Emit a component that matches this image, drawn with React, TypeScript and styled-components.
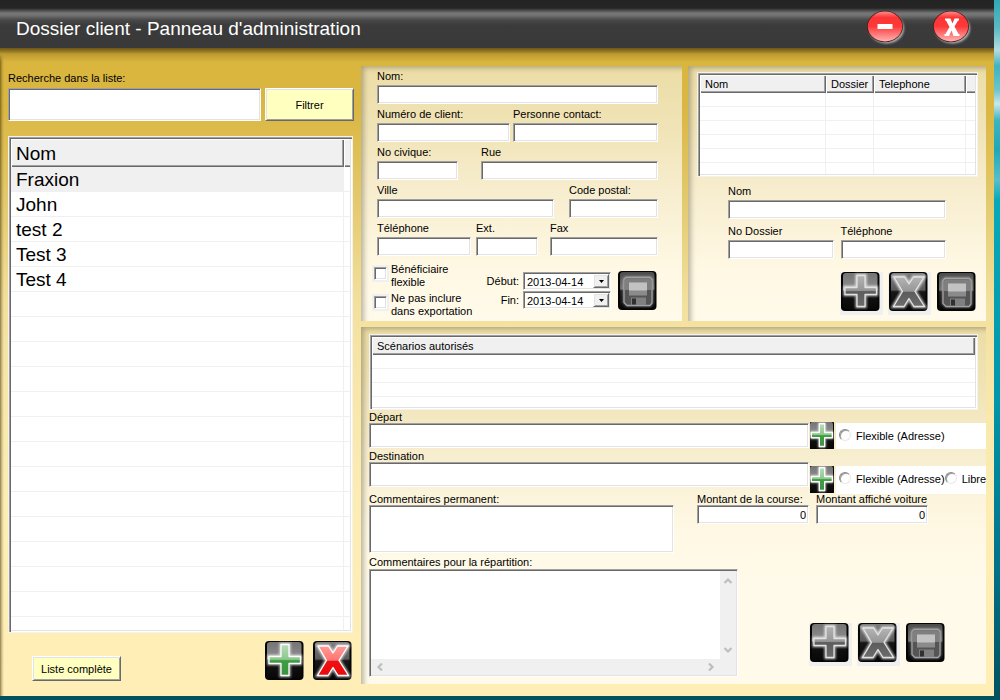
import React, { useId } from "react";
import styled, { createGlobalStyle, css } from "styled-components";

const GlobalStyle = createGlobalStyle`
  *, *::before, *::after { box-sizing: border-box; }
  body {
    margin: 0;
    min-height: 100vh;
    font: 11px/13px "Liberation Sans", Arial, sans-serif;
    color: #000;
    background: linear-gradient(180deg, #2fa9b4 0, #5bb9c2 28px, #b5dde0 50px, #3fb3bf 66px, #6cc5cc 90px,
      #c9e8ea 104px, #3fb4c1 120px, #1fa8b8 150px, #59bfc9 180px, #06a9bb 200px, #0096ab 400px,
      #00748c 560px, #00525f 696px);
  }
  input, button, select, textarea { font: inherit; color: inherit; margin: 0; }
`;

const sunken = css`
  border: 1px solid;
  border-color: #a0a0a0 #fff #fff #a0a0a0;
  box-shadow: inset 1px 1px 0 #696969, inset -1px -1px 0 #e3e3e3;
`;

const raised = css`
  border: 1px solid;
  border-color: #fff #696969 #696969 #fff;
  box-shadow: inset 1px 1px 0 #e3e3e3, inset -1px -1px 0 #a0a0a0;
`;

const Window = styled.div`
  margin: 0 6px 4px 0;
`;

const TitleBar = styled.header`
  height: 48px;
  padding: 6px 22px 0 16px;
  display: flex;
  align-items: center;
  background: linear-gradient(180deg, #232323 0, #252525 8px, #757575 13px, #757575 15px, #484848 20px, #3b3b3b 25px, #393939 100%);
`;

const Title = styled.h1`
  flex: 1;
  margin: 0;
  padding-top: 3px;
  color: #fff;
  font-size: 19px;
  line-height: 24px;
  font-weight: 400;
  white-space: nowrap;
`;

const RoundButtons = styled.div`
  display: flex;
  gap: 26px;
`;

const BareButton = styled.button`
  display: block;
  padding: 0;
  border: 0;
  background: none;
  svg { display: block; }
`;

const Body = styled.main`
  display: grid;
  grid-template-columns: 345px minmax(0, 1fr);
  gap: 8px;
  padding: 18px 8px 12px;
  background:
    linear-gradient(180deg, #6d5716 0, #8e7322 3px, #bd9a31 6px, rgba(217, 181, 60, 0) 14px),
    linear-gradient(90deg, rgba(70, 55, 10, 0.6) 0, rgba(70, 55, 10, 0.2) 2px, rgba(70, 55, 10, 0) 4px),
    linear-gradient(180deg, #d9b53c 0, #dab742 60px, #e4ca6e 155px, #f3e09d 255px, #f8e6a8 330px, #fdedb4 460px, #ffeeb6 100%);
`;

const Column = styled.div`
  display: flex;
  flex-direction: column;
  min-width: 0;
`;

const Label = styled.label<{ $line?: number }>`
  display: block;
  height: ${(p) => p.$line ?? 19}px;
  padding-top: 1px;
  line-height: ${(p) => p.$line ?? 19}px;
  white-space: nowrap;
`;

const TextBox = styled.input<{ $h?: number; $right?: boolean }>`
  ${sunken}
  display: block;
  width: 100%;
  height: ${(p) => p.$h ?? 19}px;
  padding: 1px 2px;
  border-radius: 0;
  outline: 0;
  background: #fff;
  text-align: ${(p) => (p.$right ? "right" : "left")};
`;

const TextArea = styled.textarea<{ $h: number }>`
  ${sunken}
  display: block;
  width: 100%;
  height: ${(p) => p.$h}px;
  padding: 2px;
  border-radius: 0;
  resize: none;
  background: #fff;
`;

const SearchRow = styled.div`
  display: grid;
  grid-template-columns: 1fr 89px;
  gap: 4px;
  margin: 0 -1px 15px 0;
`;

const PushButton = styled.button`
  ${raised}
  padding: 1px 0 0;
  border-radius: 0;
  background: #ffffc0;
`;

const ListFrame = styled.div<{ $h: number }>`
  height: ${(p) => p.$h}px;
  overflow: hidden;
  background: #fff;
  border: 1px solid #f4f2ea;
  box-shadow: inset 1px 1px 0 #a0a0a0, inset 2px 2px 0 #696969, inset -1px -1px 0 #fff, inset -2px -2px 0 #e3e3e3;
  padding: 2px;
`;

const Clip = styled.div`
  height: 100%;
  overflow: hidden;
`;

const ListTable = styled.table<{ $row: number; $head: number; $font: number }>`
  width: 100%;
  table-layout: fixed;
  border-collapse: separate;
  border-spacing: 0;
  font-size: ${(p) => p.$font}px;
  text-align: left;
  th {
    height: ${(p) => p.$head}px;
    padding: 0 5px;
    font-weight: 400;
    background: #f0f0f0;
    box-shadow: inset 1px 1px 0 #fff, inset -1px -1px 0 #696969, inset -2px -2px 0 #a0a0a0;
    white-space: nowrap;
  }
  th:last-child:not(:first-child) {
    box-shadow: inset 1px 1px 0 #fff, inset 0 -1px 0 #696969, inset 0 -2px 0 #a0a0a0;
  }
  td {
    height: ${(p) => p.$row}px;
    padding: 2px 5px 0;
    border-bottom: 1px solid #f0f0f0;
    border-right: 1px solid #f0f0f0;
    line-height: ${(p) => p.$row - 3}px;
  }
  td:last-child { border-right: 0; }
`;

const Cell = styled.td<{ $selected?: boolean }>`
  background: ${(p) => (p.$selected ? "#f0f0f0" : "transparent")};
`;

const ListActions = styled.div`
  display: flex;
  gap: 9px;
  padding: 7px 1px 0 24px;
`;

const FullListButton = styled(PushButton)`
  width: 89px;
  height: 25px;
  margin: 16px auto 0 0;
`;

const TopPanels = styled.div`
  display: grid;
  grid-template-columns: minmax(0, 321fr) minmax(0, 298fr);
  gap: 6px;
  margin-bottom: 6px;
`;

const Panel = styled.section<{ $pad: string }>`
  padding: ${(p) => p.$pad};
  background: linear-gradient(180deg, #ecdda6 0, #f0e3b6 60px, #f8efd2 135px, #fff8e4 205px, #fffaea 260px);
  box-shadow: inset 5px 4px 5px -2px rgba(90, 85, 60, 0.4);
`;

const FieldRow = styled.div<{ $cols: string; $gap?: number }>`
  display: grid;
  grid-template-columns: ${(p) => p.$cols};
  gap: ${(p) => p.$gap ?? 0}px;
`;

const OptionsRow = styled.div`
  display: flex;
  margin: 7px 0 0 -3px;
`;

const Checks = styled.div`
  display: flex;
  flex-direction: column;
  gap: 3px;
`;

const CheckLabel = styled.label`
  display: flex;
  gap: 4px;
`;

const CheckBox = styled.input`
  ${sunken}
  appearance: none;
  width: 13px;
  height: 13px;
  margin-top: 4px;
  background: #fff;
  outline: 2px solid #f0f0f0;
  outline-offset: 0;
`;

const Dates = styled.div`
  display: grid;
  grid-template-columns: auto 88px;
  align-content: start;
  column-gap: 4px;
  row-gap: 1px;
  margin: 9px 7px 0 auto;
  text-align: right;
`;

const Picker = styled.div`
  position: relative;
`;

const DateSelect = styled.select`
  ${sunken}
  appearance: none;
  display: block;
  width: 100%;
  height: 18px;
  padding: 2px 18px 0 3px;
  border-radius: 0;
  background: #fff;
`;

const Drop = styled.span`
  ${raised}
  position: absolute;
  top: 2px;
  right: 2px;
  width: 16px;
  height: 14px;
  display: grid;
  place-items: center;
  background: #f0f0f0;
  pointer-events: none;
`;

const SaveSlot = styled.div`
  margin: 8px 1px 0 0;
`;

const ContactForm = styled.div`
  display: grid;
  gap: 2px;
  padding: 4px 32px 0 31px;
`;

const Actions = styled.div<{ $margin: string }>`
  display: flex;
  justify-content: flex-end;
  gap: 5px;
  margin: ${(p) => p.$margin};
`;

const IconPad = styled.div<{ $on?: boolean }>`
  width: 43px;
  height: 43px;
  padding-left: 1px;
  background: ${(p) => (p.$on ? "#f0f0f0" : "transparent")};
`;

const AddressRow = styled.div<{ $h: number }>`
  display: grid;
  grid-template-columns: minmax(0, 1fr) 176px;
  gap: 1px;
  align-items: end;
  height: ${(p) => p.$h}px;
`;

const AddressField = styled.div`
  align-self: start;
`;

const Choices = styled.div<{ $h: number }>`
  display: flex;
  gap: 2px;
  height: ${(p) => p.$h}px;
`;

const RadioStrip = styled.div<{ $h: number }>`
  flex: 1;
  align-self: flex-end;
  display: flex;
  height: ${(p) => p.$h}px;
  padding: 6px 0 0 3px;
  background: #fff;
  white-space: nowrap;
`;

const RadioLabel = styled.label`
  display: flex;
  gap: 5px;
  height: 13px;
  line-height: 15px;
`;

const Radio = styled.input`
  appearance: none;
  flex: none;
  width: 12px;
  height: 12px;
  border: 1px solid;
  border-color: #8a8a8a #e8e8e8 #e8e8e8 #8a8a8a;
  border-radius: 50%;
  box-shadow: inset 1px 1px 0 #9c9c9c;
  background: #fff;
`;

const Notes = styled.div`
  display: grid;
  grid-template-columns: minmax(0, 1fr) 112px 112px 51px;
  column-gap: 7px;
`;

const NoteField = styled.div`
  margin-right: 16px;
`;

const TopLabel = styled.label`
  display: block;
  height: 11px;
  line-height: 10px;
  white-space: nowrap;
`;

const Dispatch = styled.div`
  display: grid;
  grid-template-columns: minmax(0, 369fr) 248px;
  align-items: end;
`;

const ScrollFrame = styled.div`
  ${sunken}
  display: grid;
  grid-template-columns: minmax(0, 1fr) 16px;
  grid-template-rows: 88px 16px;
  padding: 1px;
  background: #f0f0f0;
`;

const InnerArea = styled.textarea`
  display: block;
  width: 100%;
  height: 88px;
  padding: 1px;
  border: 0;
  outline: 0;
  resize: none;
  overflow: hidden;
  background: #fff;
`;

const Track = styled.div<{ $vertical?: boolean }>`
  display: flex;
  flex-direction: ${(p) => (p.$vertical ? "column" : "row")};
  justify-content: space-between;
  align-items: center;
  padding: ${(p) => (p.$vertical ? "6px 0 5px" : "0 5px")};
`;

type Glyph = "plus" | "cross" | "save";
type Tone = "green" | "red" | "gray";

const tones: Record<Tone, [string, string, string, string]> = {
  green: ["#b9dcb9", "#8cc78c", "#3f9f42", "#3a9440"],
  red: ["#ff9a96", "#ff7572", "#f01010", "#ea0a0a"],
  gray: ["#b4b4b4", "#979797", "#5c5c5c", "#6c6c6c"],
};

const outlines: Record<"plus" | "cross", string> = {
  plus: "M16 3.500H24V15.500H35.500V22.500H24V34.500H16V22.500H4V15.500H16Z",
  cross: "M5 5H15.500L20 12L24.500 5H35L26 19.500L35.500 34.500H25L20 26.500L15 34.500H4.500L13.500 19.500Z",
};

const backs: Record<Glyph, [string, string, string]> = {
  plus: ["#757575", "#8f8f8f", "#141414"],
  cross: ["#7c7c7c", "#5a5a5a", "#161616"],
  save: ["#4c4c4c", "#6e6e6e", "#1c1c1c"],
};

interface TileProps {
  glyph: Glyph;
  tone?: Tone;
  small?: boolean;
}

function TileIcon({ glyph, tone = "gray", small }: TileProps) {
  const id = useId().replace(/:/g, "");
  const t = tones[tone];
  const b = backs[glyph];
  const edge = tone === "gray" ? "#e2e2e2" : "#fff";
  return (
    <svg
      width={small ? 24 : 39}
      height={small ? 27 : 39}
      viewBox={small ? "2 1 36 37" : "0 0 39 39"}
      preserveAspectRatio="none"
      aria-hidden="true"
    >
      <defs>
        <linearGradient id={`g${id}`} x1="0" y1="0" x2="0" y2="1">
          <stop offset="0" stopColor={t[0]} />
          <stop offset=".48" stopColor={t[1]} />
          <stop offset=".52" stopColor={t[2]} />
          <stop offset="1" stopColor={t[3]} />
        </linearGradient>
        <linearGradient id={`b${id}`} x1="0" y1="0" x2="0" y2="1">
          <stop offset="0" stopColor={b[0]} />
          <stop offset=".47" stopColor={b[1]} />
          <stop offset=".52" stopColor={b[2]} />
          <stop offset="1" stopColor="#080808" />
        </linearGradient>
        <filter id={`f${id}`} x="-20%" y="-20%" width="140%" height="140%">
          <feGaussianBlur stdDeviation="1.300" />
        </filter>
      </defs>
      <rect width="38.500" height="39" rx="4" fill="#050505" />
      <rect x="2" y="1" width="34.500" height="36" rx="3" fill={`url(#b${id})`} />
      {glyph !== "save" && (
        <>
          <path d={outlines[glyph]} fill="none" stroke="#fff" strokeWidth="3.500" opacity=".65" filter={`url(#f${id})`} />
          <path
            d={outlines[glyph]}
            fill={`url(#g${id})`}
            stroke={edge}
            strokeWidth={small ? 2 : 1.3}
            strokeLinejoin="round"
          />
        </>
      )}
      {glyph === "save" && (
        <>
          <path d="M8 6.500H32L34 8.500V32L32 34.500H9L6 31.500V8.500Z" fill="none" stroke="#fff" strokeWidth="3" opacity=".3" filter={`url(#f${id})`} />
          <path d="M8 6.500H32L34 8.500V32L32 34.500H9L6 31.500V8.500Z" fill="#555" stroke="#a2a2a2" strokeWidth="1.300" strokeLinejoin="round" />
          <path d="M8 7.500H32L33 9V19H7V9Z" fill="#8d8d8d" opacity=".75" />
          <rect x="11" y="11.500" width="18" height="13" fill="#8b8b8b" />
          <rect x="11" y="11.500" width="18" height="8" fill="#c2c2c2" />
          <path d="M13 26.500H28V34H13Z" fill="#808080" />
          <rect x="14" y="27.500" width="4" height="6" fill="#303030" />
        </>
      )}
    </svg>
  );
}

function RoundIcon({ close }: { close?: boolean }) {
  const id = useId().replace(/:/g, "");
  return (
    <svg width="40" height="36" viewBox="0 0 40 36" aria-hidden="true">
      <defs>
        <linearGradient id={`r${id}`} x1="0" y1="0" x2="0" y2="1">
          <stop offset="0" stopColor="#ff8a8a" />
          <stop offset=".2" stopColor="#fd3434" />
          <stop offset=".5" stopColor="#fd3a3a" />
          <stop offset="1" stopColor="#ffb4b4" />
        </linearGradient>
        <filter id={`s${id}`}>
          <feGaussianBlur stdDeviation=".8" />
        </filter>
      </defs>
      <ellipse cx="20.500" cy="19.500" rx="17.500" ry="15" fill="#b5b5b5" filter={`url(#s${id})`} />
      <ellipse cx="19" cy="17.500" rx="18" ry="15.700" fill="#4a1a1a" />
      <ellipse cx="19" cy="17.500" rx="17.200" ry="14.900" fill={`url(#r${id})`} />
      {close ? (
        <path d="M13 9.500H18.500L20.500 14.500L22.500 9.500H27V11.500H26L22.500 17.500L26.500 25H27.500V27H21.500L19.500 21.500L17 27H12.500V25H13.500L17.500 18L14 11.500H13Z" fill="#fff" />
      ) : (
        <rect x="11.500" y="15" width="15" height="5" fill="#fff" />
      )}
    </svg>
  );
}

function Chevron({ turn }: { turn: number }) {
  return (
    <svg width="8" height="8" viewBox="0 0 8 8" aria-hidden="true">
      <path d="M.5 6L4 2.500L7.500 6" fill="none" stroke="#bdbdbd" strokeWidth="2.200" transform={`rotate(${turn} 4 4)`} />
    </svg>
  );
}

interface FieldProps {
  id: string;
  label: string;
  line?: number;
  h?: number;
}

function Field({ id, label, line, h }: FieldProps) {
  return (
    <div>
      <Label htmlFor={id} $line={line}>{label}</Label>
      <TextBox id={id} $h={h} />
    </div>
  );
}

function DateField({ id, label }: { id: string; label: string }) {
  return (
    <>
      <Label htmlFor={id} $line={16}>{label}</Label>
      <Picker>
        <DateSelect id={id} defaultValue="2013-04-14">
          <option>2013-04-14</option>
        </DateSelect>
        <Drop>
          <svg width="5" height="3" viewBox="0 0 5 3" aria-hidden="true"><path d="M0 0H5L2.500 3Z" fill="#000" /></svg>
        </Drop>
      </Picker>
    </>
  );
}

function TileButton({ name, ...icon }: TileProps & { name: string }) {
  return (
    <BareButton type="button" aria-label={name}>
      <TileIcon {...icon} />
    </BareButton>
  );
}

function RecordActions({ margin }: { margin: string }) {
  return (
    <Actions $margin={margin}>
      <IconPad $on><TileButton glyph="plus" name="Ajouter" /></IconPad>
      <IconPad $on><TileButton glyph="cross" name="Supprimer" /></IconPad>
      <IconPad><TileButton glyph="save" name="Enregistrer" /></IconPad>
    </Actions>
  );
}

const emptyRows = (n: number, cols: number) =>
  Array.from({ length: n }, (_, r) => (
    <tr key={`empty${r}`}>
      {Array.from({ length: cols }, (_, c) => <Cell key={c} />)}
    </tr>
  ));

const clients = ["Fraxion", "John", "test 2", "Test 3", "Test 4"];

export default function App() {
  return (
    <>
      <GlobalStyle />
      <Window>
        <TitleBar>
          <Title>Dossier client - Panneau d'administration</Title>
          <RoundButtons>
            <BareButton type="button" aria-label="Réduire"><RoundIcon /></BareButton>
            <BareButton type="button" aria-label="Fermer"><RoundIcon close /></BareButton>
          </RoundButtons>
        </TitleBar>
        <Body>
          <Column>
            <Label htmlFor="recherche" $line={22}>Recherche dans la liste:</Label>
            <SearchRow>
              <TextBox id="recherche" $h={33} />
              <PushButton type="button">Filtrer</PushButton>
            </SearchRow>
            <ListFrame $h={497}>
              <Clip>
                <ListTable $row={25} $head={28} $font={19}>
                  <colgroup><col /><col width="6" /></colgroup>
                  <thead><tr><th>Nom</th><th /></tr></thead>
                  <tbody>
                    {clients.map((c, i) => (
                      <tr key={c}><Cell $selected={i === 0}>{c}</Cell><Cell /></tr>
                    ))}
                    {emptyRows(14, 2)}
                  </tbody>
                </ListTable>
              </Clip>
            </ListFrame>
            <ListActions>
              <FullListButton type="button">Liste complète</FullListButton>
              <TileButton glyph="plus" tone="green" name="Ajouter un client" />
              <TileButton glyph="cross" tone="red" name="Supprimer le client" />
            </ListActions>
          </Column>

          <Column>
            <TopPanels>
              <Panel $pad="0 24px 0 16px">
                <FieldRow $cols="1fr"><Field id="nom" label="Nom:" /></FieldRow>
                <FieldRow $cols="133fr 145fr" $gap={3}>
                  <Field id="numero" label="Numéro de client:" />
                  <Field id="contact" label="Personne contact:" />
                </FieldRow>
                <FieldRow $cols="81fr 177fr" $gap={23}>
                  <Field id="civique" label="No civique:" />
                  <Field id="rue" label="Rue" />
                </FieldRow>
                <FieldRow $cols="177fr 89fr" $gap={15}>
                  <Field id="ville" label="Ville" />
                  <Field id="postal" label="Code postal:" />
                </FieldRow>
                <FieldRow $cols="161fr 108fr" $gap={12}>
                  <FieldRow $cols="94fr 62fr" $gap={5}>
                    <Field id="tel" label="Téléphone" />
                    <Field id="ext" label="Ext." />
                  </FieldRow>
                  <Field id="fax" label="Fax" />
                </FieldRow>
                <OptionsRow>
                  <Checks>
                    <CheckLabel><CheckBox type="checkbox" /><span>Bénéficiaire<br />flexible</span></CheckLabel>
                    <CheckLabel><CheckBox type="checkbox" /><span>Ne pas inclure<br />dans exportation</span></CheckLabel>
                  </Checks>
                  <Dates>
                    <DateField id="debut" label="Début:" />
                    <DateField id="fin" label="Fin:" />
                  </Dates>
                  <SaveSlot><TileButton glyph="save" name="Enregistrer le client" /></SaveSlot>
                </OptionsRow>
              </Panel>

              <Panel $pad="6px 8px 6px 9px">
                <ListFrame $h={105}>
                  <Clip>
                    <ListTable $row={14} $head={18} $font={11}>
                      <colgroup><col /><col width="48" /><col width="92" /><col width="9" /></colgroup>
                      <thead><tr><th>Nom</th><th>Dossier</th><th>Telephone</th><th /></tr></thead>
                      <tbody>{emptyRows(6, 4)}</tbody>
                    </ListTable>
                  </Clip>
                </ListFrame>
                <ContactForm>
                  <Field id="c-nom" label="Nom" />
                  <FieldRow $cols="1fr 1fr" $gap={7}>
                    <Field id="c-dossier" label="No Dossier" />
                    <Field id="c-tel" label="Téléphone" />
                  </FieldRow>
                </ContactForm>
                <RecordActions margin="13px -1px 0 0" />
              </Panel>
            </TopPanels>

            <Panel $pad="7px 0 7px 8px">
              <Column>
                <FieldRow $cols="minmax(0, 1fr) 8px">
                  <ListFrame $h={76}>
                    <Clip>
                      <ListTable $row={14} $head={18} $font={11}>
                        <thead><tr><th>Scénarios autorisés</th></tr></thead>
                        <tbody>{emptyRows(4, 1)}</tbody>
                      </ListTable>
                    </Clip>
                  </ListFrame>
                </FieldRow>
                <AddressRow $h={39}>
                  <AddressField><Field id="depart" label="Départ" line={13} h={25} /></AddressField>
                  <Choices $h={27}>
                    <TileButton glyph="plus" tone="green" name="Ajouter un départ" small />
                    <RadioStrip $h={26}>
                      <RadioLabel><Radio type="radio" name="depart-mode" />Flexible (Adresse)</RadioLabel>
                    </RadioStrip>
                  </Choices>
                </AddressRow>
                <AddressRow $h={45}>
                  <AddressField><Field id="destination" label="Destination" line={13} h={25} /></AddressField>
                  <Choices $h={30}>
                    <TileButton glyph="plus" tone="green" name="Ajouter une destination" small />
                    <RadioStrip $h={28}>
                      <RadioLabel><Radio type="radio" name="dest-mode" />Flexible (Adresse)</RadioLabel>
                      <RadioLabel><Radio type="radio" name="dest-mode" />Libre</RadioLabel>
                    </RadioStrip>
                  </Choices>
                </AddressRow>
                <Notes>
                  <NoteField>
                    <TopLabel htmlFor="permanent">Commentaires permanent:</TopLabel>
                    <TextArea id="permanent" $h={48} />
                  </NoteField>
                  <div>
                    <TopLabel htmlFor="course">Montant de la course:</TopLabel>
                    <TextBox id="course" $right defaultValue="0" />
                  </div>
                  <div>
                    <TopLabel htmlFor="voiture">Montant affiché voiture</TopLabel>
                    <TextBox id="voiture" $right defaultValue="0" />
                  </div>
                </Notes>
                <Dispatch>
                  <div>
                    <Label htmlFor="repartition" $line={16}>Commentaires pour la répartition:</Label>
                    <ScrollFrame>
                      <InnerArea id="repartition" />
                      <Track $vertical><Chevron turn={0} /><Chevron turn={180} /></Track>
                      <Track><Chevron turn={-90} /><Chevron turn={90} /></Track>
                    </ScrollFrame>
                  </div>
                  <RecordActions margin="0 38px 11px 0" />
                </Dispatch>
              </Column>
            </Panel>
          </Column>
        </Body>
      </Window>
    </>
  );
}
